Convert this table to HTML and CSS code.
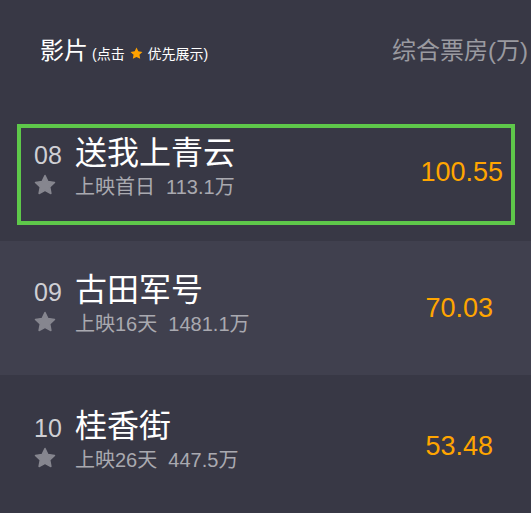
FILE: index.html
```html
<!DOCTYPE html>
<html lang="zh">
<head>
<meta charset="utf-8">
<link rel="stylesheet" href="styles.css">
</head>
<body>
<div class="page">
  <div class="header">
    <div class="h-left">
      <span class="h-title">影片</span>
      <span class="h-note">(点击 <svg class="h-star" viewBox="0 0 24 24"><path d="M12 2.5l2.9 6 6.6.9-4.8 4.6 1.2 6.5L12 17.4l-5.9 3.1 1.2-6.5L2.5 9.4l6.6-.9z"/></svg> 优先展示)</span>
    </div>
    <div class="h-right">综合票房(万)</div>
  </div>

  <div class="row row-sel">
    <div class="box">
      <div class="info info-sel">
        <div class="line1"><span class="rank">08</span><span class="title">送我上青云</span></div>
        <div class="line2"><span class="star-col"><svg class="star" viewBox="0 0 24 24"><path d="M12 2.5l2.9 6 6.6.9-4.8 4.6 1.2 6.5L12 17.4l-5.9 3.1 1.2-6.5L2.5 9.4l6.6-.9z"/></svg></span><span class="sub">上映首日&nbsp; 113.1万</span></div>
      </div>
      <div class="value value-sel">100.55</div>
    </div>
  </div>

  <div class="row row-alt">
    <div class="info info-2">
      <div class="line1"><span class="rank">09</span><span class="title">古田军号</span></div>
      <div class="line2"><span class="star-col"><svg class="star" viewBox="0 0 24 24"><path d="M12 2.5l2.9 6 6.6.9-4.8 4.6 1.2 6.5L12 17.4l-5.9 3.1 1.2-6.5L2.5 9.4l6.6-.9z"/></svg></span><span class="sub">上映16天&nbsp; 1481.1万</span></div>
    </div>
    <div class="value value-2">70.03</div>
  </div>

  <div class="row row-last">
    <div class="info info-3">
      <div class="line1"><span class="rank">10</span><span class="title">桂香街</span></div>
      <div class="line2"><span class="star-col"><svg class="star" viewBox="0 0 24 24"><path d="M12 2.5l2.9 6 6.6.9-4.8 4.6 1.2 6.5L12 17.4l-5.9 3.1 1.2-6.5L2.5 9.4l6.6-.9z"/></svg></span><span class="sub">上映26天&nbsp; 447.5万</span></div>
    </div>
    <div class="value value-3">53.48</div>
  </div>
</div>
</body>
</html>
```

FILE: styles.css
```css
html, body {
  margin: 0;
  padding: 0;
  background: #383845;
}
body {
  font-family: "Liberation Sans", "Noto Sans CJK SC", sans-serif;
  width: 531px;
  height: 513px;
  overflow: hidden;
}
.page {
  display: flex;
  flex-direction: column;
}
.header {
  height: 104px;
  box-sizing: border-box;
  padding: 0 3px 8px 40px;
  display: flex;
  align-items: center;
  justify-content: space-between;
}
.h-left {
  display: flex;
  align-items: baseline;
}
.h-title {
  font-size: 24px;
  color: #ffffff;
  margin-right: 4px;
}
.h-note {
  font-size: 14px;
  color: #ffffff;
}
.h-star {
  width: 15px;
  height: 15px;
  fill: #ffa200;
  vertical-align: -2px;
}
.h-right {
  font-size: 24px;
  color: #9a9aa0;
}
.row {
  display: flex;
  box-sizing: border-box;
}
.row-sel {
  height: 137px;
  padding: 20px 16px 16px 17px;
}
.box {
  flex: 1;
  border: 4px solid #5ec84a;
  display: flex;
  justify-content: space-between;
  padding: 0 8px 0 13px;
}
.row-alt {
  height: 134px;
  background: #40404e;
  padding: 0 38px 0 34px;
  justify-content: space-between;
}
.row-last {
  height: 138px;
  padding: 0 38px 0 34px;
  justify-content: space-between;
}
.info {
  display: flex;
  flex-direction: column;
  gap: 4px;
}
.info-sel { padding-top: 7px; }
.info-2 { padding-top: 31px; }
.info-3 { padding-top: 33px; }
.line1 {
  display: flex;
  align-items: baseline;
}
.rank {
  width: 41px;
  font-size: 25px;
  color: #cfcfd4;
}
.title {
  font-size: 32px;
  line-height: 36px;
  color: #ffffff;
}
.line2 {
  display: flex;
  align-items: flex-start;
  height: 25px;
}
.star-col {
  width: 41px;
  display: flex;
}
.star {
  width: 24px;
  height: 24px;
  fill: #86868f;
  stroke: #86868f;
  stroke-width: 1.5;
  stroke-linejoin: round;
  margin-left: -1px;
  margin-top: -2px;
}
.sub {
  font-size: 20px;
  line-height: 25px;
  color: #a9a9b0;
}
.value {
  font-size: 27px;
  color: #ffa500;
  align-self: center;
}
.value-sel { margin-top: -4px; }
.value-2 { margin-top: 0; }
.value-3 { margin-top: 4px; }
```
